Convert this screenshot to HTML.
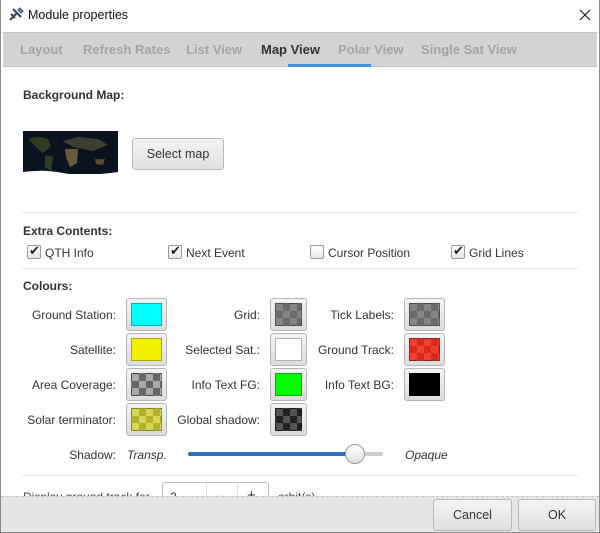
<!DOCTYPE html>
<html><head><meta charset="utf-8"><style>
*{box-sizing:border-box;margin:0;padding:0}
body{width:600px;height:533px;overflow:hidden;font-family:"Liberation Sans",sans-serif;font-size:12px;color:#333;background:#fff;position:relative}
.abs{position:absolute}
.win{position:absolute;left:0;top:0;width:600px;height:533px;border:1px solid #8a8a8a;border-top:none}
.tabs{position:absolute;left:3px;top:32px;width:594px;height:35px;background:#d3d3d3;border-top:1px solid #c4c4c4;border-bottom:1px solid #c4c4c4}
.tab{position:absolute;top:9px;font-weight:bold;color:#a3a3a3;font-size:13px;white-space:nowrap}
.lbl{position:absolute;font-size:12px;color:#333;white-space:nowrap}
.r{text-align:right}
.h{position:absolute;font-weight:bold;font-size:12px;color:#333}
.sw{position:absolute;width:41px;height:33px;border:1px solid #b5b5b5;border-radius:3px;background:linear-gradient(#f4f4f4,#dcdcdc)}
.sw i{position:absolute;left:4px;top:4px;right:4px;bottom:4px;border:1px solid rgba(0,0,0,.3)}
.cb{position:absolute;width:14px;height:14px;border:1px solid #9a9a9a;border-radius:2px;background:linear-gradient(#fff,#e6e6e6)}
.sep{position:absolute;left:22px;width:556px;height:1px;background:#e6e6e6}
.btn{position:absolute;border:1px solid #b8b8b8;border-radius:3px;background:linear-gradient(#f4f4f4,#e0e0e0);text-align:center;color:#333}
</style></head><body>
<div class="win"></div>
<svg class="abs" style="left:8px;top:6px" width="18" height="16" viewBox="0 0 18 16"><path d="M2 14 L9 7 M5 3 L13 11 M11 2 L15 6 M3 8 L7 12" stroke="#345" stroke-width="2"/><path d="M10 3l4 4" stroke="#5a7ea8" stroke-width="3"/></svg>
<div class="lbl" style="left:28px;top:8px;font-size:12.5px;color:#111">Module properties</div>
<svg class="abs" style="left:579px;top:9px" width="12" height="12" viewBox="0 0 12 12"><path d="M1 1L11 11M11 1L1 11" stroke="#222" stroke-width="1.2"/></svg>
<div class="tabs">
<div class="tab" style="left:17px">Layout</div>
<div class="tab" style="left:80px">Refresh Rates</div>
<div class="tab" style="left:183px">List View</div>
<div class="tab" style="left:258px;color:#333">Map View</div>
<div class="tab" style="left:335px">Polar View</div>
<div class="tab" style="left:418px">Single Sat View</div>
<div class="abs" style="left:285px;top:31px;width:83px;height:3px;background:#4a90d9"></div>
</div>
<div class="h" style="left:23px;top:88px">Background Map:</div>
<svg class="abs" style="left:23px;top:131px" width="95" height="45" viewBox="0 0 95 45"><rect width="95" height="43" fill="#0b1220"/><path d="M5 8 Q15 4 25 8 L28 15 L20 22 L15 18 Z" fill="#2f3d24"/><path d="M22 24 L30 26 L28 40 L22 36 Z" fill="#2f3d24"/><path d="M40 10 L55 6 L75 8 L85 14 L70 20 L60 18 L50 16 Z" fill="#3d4030"/><path d="M42 18 L55 18 L54 32 L47 36 L43 26 Z" fill="#6a5a3c"/><path d="M72 28 L82 28 L80 34 L73 33 Z" fill="#5a4a30"/><path d="M0 41 Q20 38 40 42 T95 41 V45 H0Z" fill="#fff"/></svg>
<div class="btn" style="left:132px;top:138px;width:92px;height:32px;line-height:30px;font-size:12.5px">Select map</div>
<div class="sep" style="top:212px"></div>
<div class="h" style="left:23px;top:224px">Extra Contents:</div>
<div class="cb" style="left:27px;top:245px"></div><div class="lbl" style="left:29px;top:243px;font-size:13px;color:#222">✔</div><div class="lbl" style="left:45px;top:246px">QTH Info</div>
<div class="cb" style="left:168px;top:245px"></div><div class="lbl" style="left:170px;top:243px;font-size:13px;color:#222">✔</div><div class="lbl" style="left:186px;top:246px">Next Event</div>
<div class="cb" style="left:310px;top:245px"></div><div class="lbl" style="left:328px;top:246px">Cursor Position</div>
<div class="cb" style="left:451px;top:245px"></div><div class="lbl" style="left:453px;top:243px;font-size:13px;color:#222">✔</div><div class="lbl" style="left:469px;top:246px">Grid Lines</div>
<div class="sep" style="top:268px"></div>
<div class="h" style="left:23px;top:279px">Colours:</div>

<div class="lbl r" style="left:0;width:116px;top:308px">Ground Station:</div>
<div class="lbl r" style="left:0;width:116px;top:343px">Satellite:</div>
<div class="lbl r" style="left:0;width:116px;top:378px">Area Coverage:</div>
<div class="lbl r" style="left:0;width:116px;top:413px">Solar terminator:</div>
<div class="lbl r" style="left:150px;width:110px;top:308px">Grid:</div>
<div class="lbl r" style="left:150px;width:110px;top:343px">Selected Sat.:</div>
<div class="lbl r" style="left:150px;width:110px;top:378px">Info Text FG:</div>
<div class="lbl r" style="left:150px;width:110px;top:413px">Global shadow:</div>
<div class="lbl r" style="left:290px;width:104px;top:308px">Tick Labels:</div>
<div class="lbl r" style="left:290px;width:104px;top:343px">Ground Track:</div>
<div class="lbl r" style="left:290px;width:104px;top:378px">Info Text BG:</div>

<div class="sw" style="left:126px;top:298px"><i style="background:#00ffff"></i></div>
<div class="sw" style="left:126px;top:333px"><i style="background:#f2f200"></i></div>
<div class="sw" style="left:126px;top:368px"><i style="background:repeating-conic-gradient(#666 0 25%,#aaa 0 50%) 0 0/14px 14px"></i></div>
<div class="sw" style="left:126px;top:403px"><i style="background:repeating-conic-gradient(#b3b32a 0 25%,#d6d65a 0 50%) 0 0/14px 14px"></i></div>
<div class="sw" style="left:270px;top:298px;width:37px"><i style="background:repeating-conic-gradient(#6a6a6a 0 25%,#858585 0 50%) 0 0/14px 14px"></i></div>
<div class="sw" style="left:270px;top:333px;width:37px"><i style="background:#fff"></i></div>
<div class="sw" style="left:270px;top:368px;width:37px"><i style="background:#00ff00"></i></div>
<div class="sw" style="left:270px;top:403px;width:37px"><i style="background:repeating-conic-gradient(#222 0 25%,#555 0 50%) 0 0/14px 14px"></i></div>
<div class="sw" style="left:404px;top:298px"><i style="background:repeating-conic-gradient(#6a6a6a 0 25%,#858585 0 50%) 0 0/14px 14px"></i></div>
<div class="sw" style="left:404px;top:333px"><i style="background:repeating-conic-gradient(#d82a1a 0 25%,#f04030 0 50%) 0 0/14px 14px"></i></div>
<div class="sw" style="left:404px;top:368px"><i style="background:#000"></i></div>

<div class="lbl r" style="left:0;width:116px;top:448px">Shadow:</div>
<div class="lbl" style="left:127px;top:448px;font-style:italic">Transp.</div>
<div class="lbl" style="left:405px;top:448px;font-style:italic">Opaque</div>
<div class="abs" style="left:188px;top:452px;width:195px;height:4px;background:#ccc;border-radius:2px"></div>
<div class="abs" style="left:188px;top:452px;width:168px;height:4px;background:#2f6fb8;border-radius:2px"></div>
<div class="abs" style="left:345px;top:444px;width:20px;height:20px;border-radius:50%;border:1px solid #999;background:linear-gradient(#fff,#e0e0e0)"></div>
<div class="sep" style="top:475px"></div>
<div class="lbl" style="left:23px;top:490px;color:#444">Display ground track for</div>
<div class="abs" style="left:162px;top:482px;width:107px;height:20px;border:1px solid #bbb;border-radius:3px;overflow:hidden">
<span class="lbl" style="left:7px;top:7px">2</span><span class="lbl" style="left:52px;top:5px;font-size:14px">−</span><span class="lbl" style="left:84px;top:4px;font-size:15px">+</span></div>
<div class="abs" style="left:206px;top:482px;width:1px;height:15px;background:#ddd"></div>
<div class="abs" style="left:237px;top:482px;width:1px;height:15px;background:#ddd"></div>
<div class="lbl" style="left:278px;top:490px;color:#444">orbit(s)</div>
<div class="abs" style="left:1px;top:496px;width:598px;height:36px;background:#e6e6e6;border-top:1px dashed #c8c8c8"></div>
<div class="btn" style="left:433px;top:499px;width:79px;height:32px;line-height:30px;font-size:12.5px">Cancel</div>
<div class="btn" style="left:518px;top:499px;width:78px;height:32px;line-height:30px;font-size:12.5px">OK</div>
</body></html>
